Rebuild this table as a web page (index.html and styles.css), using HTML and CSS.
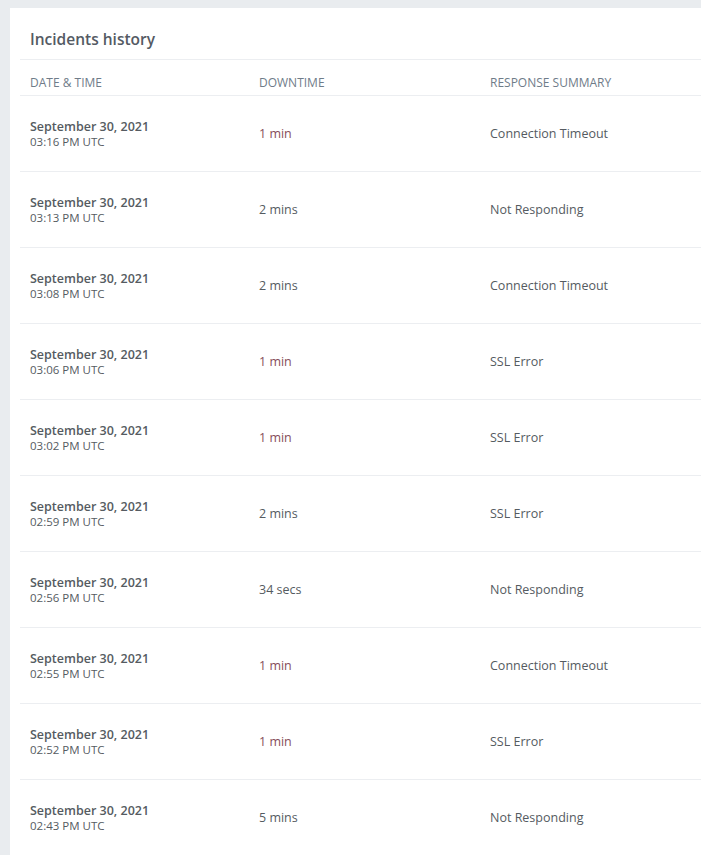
FILE: index.html
```html
<!DOCTYPE html>
<html lang="en">
<head>
<meta charset="utf-8">
<title>Incidents history</title>
<link rel="stylesheet" href="styles.css">
</head>
<body>
<div class="page">
  <section class="card">
    <h2 class="card-title">Incidents history</h2>
    <div class="table">
      <div class="row head">
        <div class="cell">Date &amp; Time</div>
        <div class="cell">Downtime</div>
        <div class="cell">Response Summary</div>
      </div>
      <div class="row"><div class="cell"><div class="date">September 30, 2021</div><div class="time">03:16 PM UTC</div></div><div class="cell short">1 min</div><div class="cell">Connection Timeout</div></div>
      <div class="row"><div class="cell"><div class="date">September 30, 2021</div><div class="time">03:13 PM UTC</div></div><div class="cell">2 mins</div><div class="cell">Not Responding</div></div>
      <div class="row"><div class="cell"><div class="date">September 30, 2021</div><div class="time">03:08 PM UTC</div></div><div class="cell">2 mins</div><div class="cell">Connection Timeout</div></div>
      <div class="row"><div class="cell"><div class="date">September 30, 2021</div><div class="time">03:06 PM UTC</div></div><div class="cell short">1 min</div><div class="cell">SSL Error</div></div>
      <div class="row"><div class="cell"><div class="date">September 30, 2021</div><div class="time">03:02 PM UTC</div></div><div class="cell short">1 min</div><div class="cell">SSL Error</div></div>
      <div class="row"><div class="cell"><div class="date">September 30, 2021</div><div class="time">02:59 PM UTC</div></div><div class="cell">2 mins</div><div class="cell">SSL Error</div></div>
      <div class="row"><div class="cell"><div class="date">September 30, 2021</div><div class="time">02:56 PM UTC</div></div><div class="cell">34 secs</div><div class="cell">Not Responding</div></div>
      <div class="row"><div class="cell"><div class="date">September 30, 2021</div><div class="time">02:55 PM UTC</div></div><div class="cell short">1 min</div><div class="cell">Connection Timeout</div></div>
      <div class="row"><div class="cell"><div class="date">September 30, 2021</div><div class="time">02:52 PM UTC</div></div><div class="cell short">1 min</div><div class="cell">SSL Error</div></div>
      <div class="row"><div class="cell"><div class="date">September 30, 2021</div><div class="time">02:43 PM UTC</div></div><div class="cell">5 mins</div><div class="cell">Not Responding</div></div>
    </div>
  </section>
</div>
</body>
</html>
```

FILE: styles.css
```css
html, body {
  margin: 0;
  padding: 0;
  background: #e9ecef;
  overflow: hidden;
}
body {
  font-family: "Open Sans", "Noto Sans", sans-serif;
  color: #555b61;
}
.page {
  padding: 8px 0 0 10px;
}
.card {
  background: #fff;
  width: 711px;
  padding: 0 0 0 10px;
}
.card-title {
  margin: 0;
  padding: 20px 0 9px 10px;
  font-size: 15.5px;
  line-height: 22px;
  font-weight: 600;
  color: #545a63;
  border-bottom: 1px solid #eceef1;
}
.row {
  display: grid;
  grid-template-columns: 229px 231px 1fr;
  align-items: center;
  height: 75px;
  border-bottom: 1px solid #eceef1;
  font-size: 12.5px;
}
.row.head {
  height: 35px;
  align-items: end;
  font-size: 12px;
  text-transform: uppercase;
  color: #6f7c89;
}
.row.head .cell {
  padding-bottom: 4px;
  line-height: 16px;
}
.cell {
  padding: 0 10px;
  line-height: 16px;
}
.date {
  font-weight: 600;
  line-height: 15px;
}
.time {
  font-size: 11.5px;
  line-height: 15px;
}
.short {
  color: #864d5a;
}
```
